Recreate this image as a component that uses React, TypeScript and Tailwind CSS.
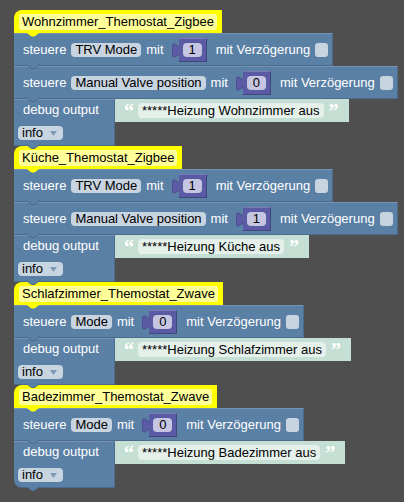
import React from "react";

const BLUE = "#5b80a5";
const PURPLE = "#5b5ba5";
const GREEN = "#c6dfd5";

function Notch({ fill, stroke }: { fill: string; stroke: string }) {
  return (
    <svg
      className="absolute left-[11px] bottom-[-4px] z-10"
      width="17"
      height="5"
      viewBox="0 0 17 5"
    >
      <path d="M0.5 0 L6.5 4.5 L9.5 4.5 L15.5 0 Z" fill={fill} stroke="none" />
      {stroke !== "none" && (
        <path d="M0.5 0 L6.5 4.5 L9.5 4.5 L15.5 0" fill="none" stroke={stroke} strokeWidth="1" />
      )}
    </svg>
  );
}

function Tab({ fill, stroke }: { fill: string; stroke: string }) {
  return (
    <svg width="8" height="15" viewBox="0 0 8 15" className="shrink-0">
      <path d="M8 0 C8 10 0 -8 0 7.5 S8 5 8 15 Z" fill={fill} />
      <path d="M8 0 C8 10 0 -8 0 7.5 S8 5 8 15" fill="none" stroke={stroke} strokeWidth="0.8" />
    </svg>
  );
}

function Hat({ label }: { label: string }) {
  return (
    <div className="relative h-[23px] bg-[#ffff00] rounded-tl-[8px] pl-[5px] pr-[5px] pt-[4px] flex items-start">
      <span className="h-[16px] leading-[16px] px-[3px] rounded-[3px] bg-[#ffff99] text-black whitespace-nowrap">
        {label}
      </span>
      <Notch fill="#ffff00" stroke="none" />
    </div>
  );
}

function Pill({ children }: { children: React.ReactNode }) {
  return (
    <span className="ml-[5px] h-[14px] leading-[14px] px-[4px] rounded-[4px] bg-[#c8d4e0] text-black whitespace-nowrap">
      {children}
    </span>
  );
}

function NumberBlock({ value }: { value: string }) {
  return (
    <div className="ml-[8px] flex items-start">
      <div className="mt-[5px] mr-[-1px] flex">
        <Tab fill={PURPLE} stroke="#45457e" />
      </div>
      <div className="h-[24px] w-[28px] bg-[#5b5ba5] border-t border-t-[#7a7ab8] border-b border-b-[#45457e] border-r border-r-[#45457e] flex items-center justify-center">
        <span className="h-[14px] leading-[14px] min-w-[19px] text-center rounded-[4px] bg-[#c6c6e2] text-black">
          {value}
        </span>
      </div>
    </div>
  );
}

function Steuere({ field, value }: { field: string; value: string }) {
  return (
    <div className="relative h-[33px] bg-[#5b80a5] border-t border-t-[#7594b5] border-b border-b-[#4a6b8d] border-r border-r-[#4a6b8d] pl-[9px] pr-[4px] flex items-center text-white whitespace-nowrap">
      <span>steuere</span>
      <Pill>{field}</Pill>
      <span className="ml-[5px]">mit</span>
      <NumberBlock value={value} />
      <span className="ml-[9px]">mit Verzögerung</span>
      <span className="ml-[5px] w-[13px] h-[14px] rounded-[3px] bg-[#c8d4e0]" />
      <Notch fill={BLUE} stroke="#4a6b8d" />
    </div>
  );
}

function StringBlock({ text }: { text: string }) {
  return (
    <div className="ml-[-8px] flex items-start">
      <div className="mt-[4px] mr-[-1px] flex">
        <Tab fill={GREEN} stroke="#a9c6ba" />
      </div>
      <div className="h-[23px] bg-[#c6dfd5] flex items-center pl-[10px] pr-[11px] whitespace-nowrap">
        <span className="w-[9px] text-white font-bold text-[20px] leading-[20px] font-['Liberation_Serif',serif]">
          “
        </span>
        <span className="ml-[5px] h-[15px] leading-[15px] px-[4px] rounded-[4px] bg-[#e5f0eb] text-black">
          {text}
        </span>
        <span className="ml-[5px] w-[9px] text-white font-bold text-[20px] leading-[20px] font-['Liberation_Serif',serif]">
          ”
        </span>
      </div>
    </div>
  );
}

function Debug({ text, last }: { text: string; last?: boolean }) {
  return (
    <div className="flex items-start">
      <div
        className={
          last
            ? "relative w-[101px] h-[47px] bg-[#5b80a5] border-t border-t-[#7594b5] border-b border-b-[#4a6b8d] border-r border-r-[#4a6b8d] rounded-bl-[8px]"
            : "relative w-[101px] h-[47px] bg-[#5b80a5] border-t border-t-[#7594b5] border-b border-b-[#4a6b8d] border-r border-r-[#4a6b8d]"
        }
      >
        <div className="h-[19px] flex items-center pl-[9px] text-white whitespace-nowrap">debug output</div>
        <div className="mt-[7px] ml-[4px] inline-flex items-center h-[14px] pl-[4px] pr-[6px] rounded-[4px] bg-[#c8d4e0] text-black leading-[14px]">
          <span>info</span>
          <svg width="7" height="5" viewBox="0 0 7 5" className="ml-[7px]">
            <path d="M0 0 L7 0 L3.5 5 Z" fill="#7f98b3" />
          </svg>
        </div>
        <Notch fill={BLUE} stroke="#4a6b8d" />
      </div>
      <StringBlock text={text} />
    </div>
  );
}

export default function App() {
  return (
    <div className="w-[404px] h-[502px] bg-[#4f4f4f] overflow-hidden font-['Liberation_Sans',Arial,sans-serif] text-[13px]">
      <div className="pt-[10px] pl-[14px] flex flex-col items-start">
        <Hat label="Wohnzimmer_Themostat_Zigbee" />
        <Steuere field="TRV Mode" value="1" />
        <Steuere field="Manual Valve position" value="0" />
        <Debug text="*****Heizung Wohnzimmer aus" />
        <Hat label="Küche_Themostat_Zigbee" />
        <Steuere field="TRV Mode" value="1" />
        <Steuere field="Manual Valve position" value="1" />
        <Debug text="*****Heizung Küche aus" />
        <Hat label="Schlafzimmer_Themostat_Zwave" />
        <Steuere field="Mode" value="0" />
        <Debug text="*****Heizung Schlafzimmer aus" />
        <Hat label="Badezimmer_Themostat_Zwave" />
        <Steuere field="Mode" value="0" />
        <Debug text="*****Heizung Badezimmer aus" last />
      </div>
    </div>
  );
}
